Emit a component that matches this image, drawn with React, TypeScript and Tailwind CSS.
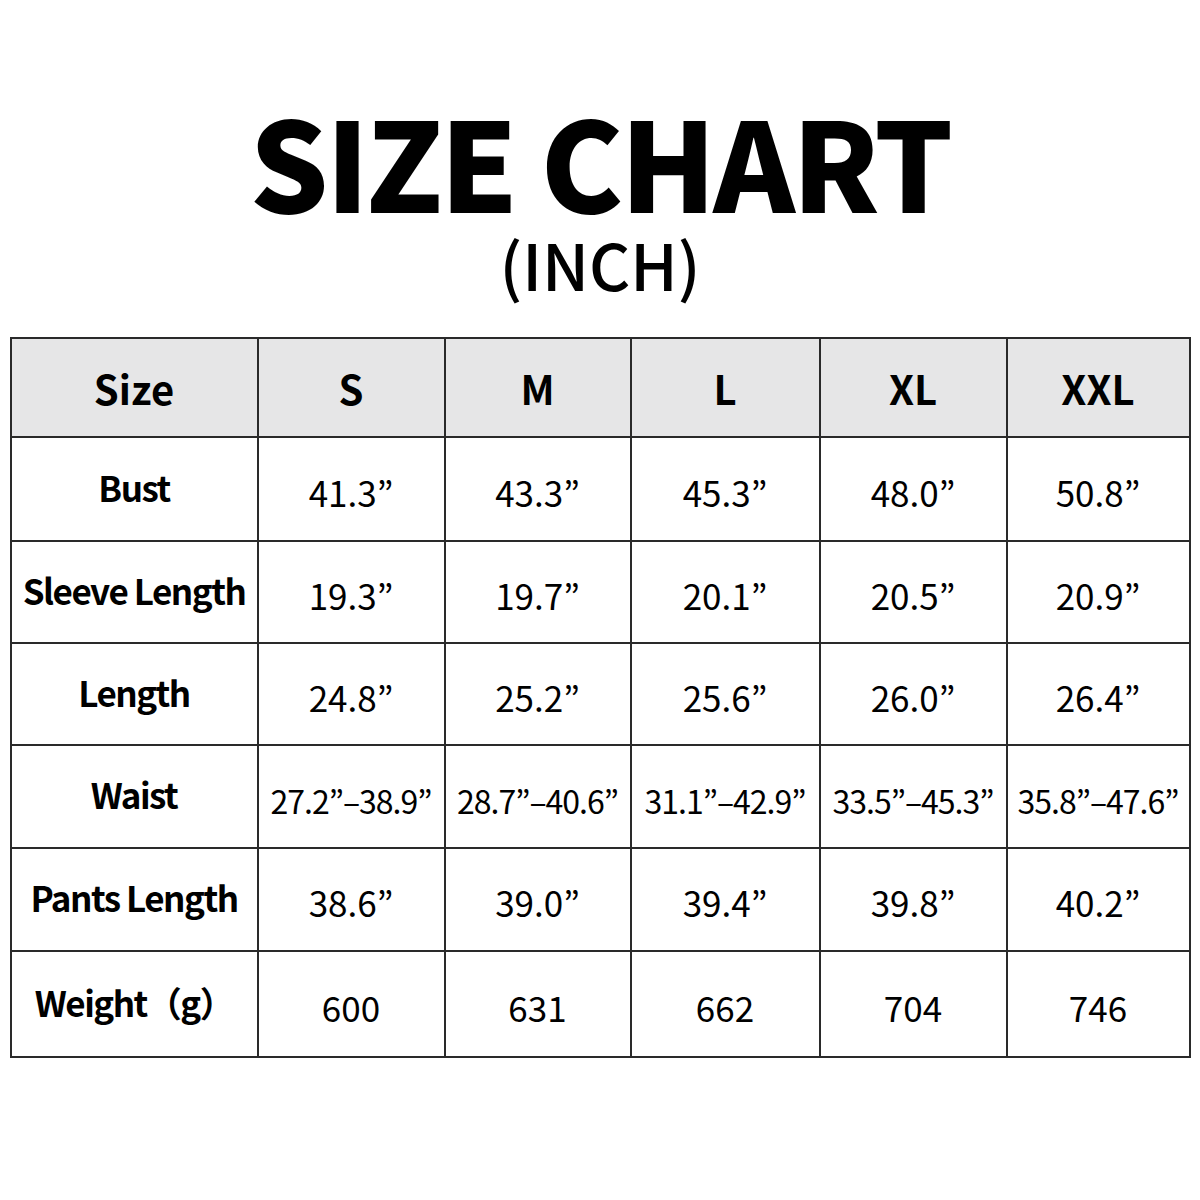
import React from 'react';

const sizes = ['S', 'M', 'L', 'XL', 'XXL'];

const rows: { label: string; values: string[]; small?: boolean }[] = [
  { label: 'Bust', values: ['41.3”', '43.3”', '45.3”', '48.0”', '50.8”'] },
  { label: 'Sleeve Length', values: ['19.3”', '19.7”', '20.1”', '20.5”', '20.9”'] },
  { label: 'Length', values: ['24.8”', '25.2”', '25.6”', '26.0”', '26.4”'] },
  {
    label: 'Waist',
    values: ['27.2”–38.9”', '28.7”–40.6”', '31.1”–42.9”', '33.5”–45.3”', '35.8”–47.6”'],
    small: true,
  },
  { label: 'Pants Length', values: ['38.6”', '39.0”', '39.4”', '39.8”', '40.2”'] },
  { label: 'Weight（g）', values: ['600', '631', '662', '704', '746'] },
];

const colWidths = ['w-[247px]', 'w-[187px]', 'w-[186px]', 'w-[189px]', 'w-[187px]', 'w-[183px]'];
const rowHeights = ['h-[104px]', 'h-[102px]', 'h-[102px]', 'h-[103px]', 'h-[103px]', 'h-[106px]'];

export default function App() {
  return (
    <div
      className="w-[1200px] h-[1200px] bg-white text-black flex flex-col items-center"
      style={{ fontFamily: '"Noto Sans CJK KR", "Noto Sans", sans-serif' }}
    >
      <h1 className="mt-[94px] text-[124px] leading-[130px] font-black tracking-[-3px]">SIZE CHART</h1>
      <div className="mt-[4px] text-[64px] leading-[70px] font-medium">(INCH)</div>

      <table className="mt-[39px] w-[1179px] border-collapse table-fixed border-2 border-[#2a2a2a]">
        <thead>
          <tr className="h-[99px] bg-[#e6e6e7]">
            <th className={`${colWidths[0]} border-2 border-[#2a2a2a] text-[40px] font-bold`}>Size</th>
            {sizes.map((s, i) => (
              <th key={s} className={`${colWidths[i + 1]} border-2 border-[#2a2a2a] text-[40px] font-bold`}>
                {s}
              </th>
            ))}
          </tr>
        </thead>
        <tbody>
          {rows.map((row, r) => (
            <tr key={row.label} className={rowHeights[r]}>
              <td className="border-2 border-[#2a2a2a] text-center text-[35px] font-bold tracking-[-1.5px] pb-[4px]">
                {row.label}
              </td>
              {row.values.map((v, i) => (
                <td
                  key={i}
                  className={`border-2 border-[#2a2a2a] text-center whitespace-nowrap pt-[6px] ${
                    row.small ? 'text-[32px] tracking-[-1px]' : 'text-[35px]'
                  }`}
                >
                  {v}
                </td>
              ))}
            </tr>
          ))}
        </tbody>
      </table>
    </div>
  );
}
